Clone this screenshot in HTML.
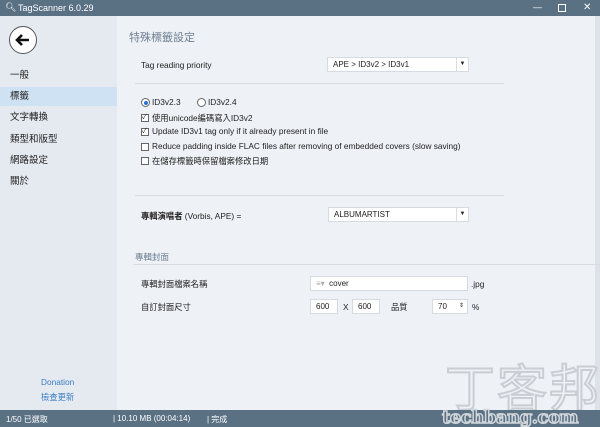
<!DOCTYPE html><html><head><meta charset="utf-8"><style>
*{margin:0;padding:0;box-sizing:border-box}
html,body{width:600px;height:427px;overflow:hidden}
body{font-family:"Liberation Sans","Noto Sans CJK TC",sans-serif;font-size:8px;color:#222;background:#eef1f6;position:relative}
.abs{position:absolute}
.tb{left:0;top:0;width:600px;height:16px;background:#5a7184;color:#fff;font-size:9px}
.sb{left:0;top:16px;width:117px;height:394px;background:#e5eaf0}
.st{left:0;top:410px;width:600px;height:17px;background:#5a7184;color:#fff;font-size:8px}
.nav{left:0;width:117px;height:19px;font-size:9.5px;padding-left:10px;line-height:19px}
.cb{width:8px;height:8px;border:1px solid #666;background:#fff;display:inline-block}
.inp{background:#fff;border:1px solid #d6dbe2;height:15px;line-height:13px;padding-left:5px;font-size:8px}
.hr{height:1px;background:#d8dde4}
.t{font-size:8.3px;white-space:nowrap}
</style></head><body>
<div class="abs tb"><span class="abs" style="left:5px;top:2px;font-size:9px">🔍︎</span><span class="abs" style="left:18px;top:3px">TagScanner 6.0.29</span>
<span class="abs" style="left:533px;top:2px">—</span><span class="abs" style="left:558px;top:1px;width:8px;height:8px;border:1px solid #fff;top:4px"></span><span class="abs" style="left:583px;top:2px;font-size:10px">✕</span></div>
<div class="abs sb"></div>
<div class="abs" style="left:9px;top:26px;width:28px;height:28px;border:1px solid #555;border-radius:50%;background:#fff"><svg width="26" height="26" viewBox="0 0 26 26"><path d="M19 13H7M12 8l-5 5 5 5" stroke="#111" stroke-width="2.6" fill="none"/></svg></div>
<div class="abs nav" style="top:66px">一般</div>
<div class="abs nav" style="top:87px;background:#cfe2f3">標籤</div>
<div class="abs nav" style="top:108px">文字轉換</div>
<div class="abs nav" style="top:130px">類型和版型</div>
<div class="abs nav" style="top:151px">網路設定</div>
<div class="abs nav" style="top:172px">關於</div>
<div class="abs t" style="left:41px;top:377px;color:#3a7cc4">Donation</div>
<div class="abs t" style="left:41px;top:391px;color:#3a7cc4">檢查更新</div>
<div class="abs" style="left:595px;top:16px;width:5px;height:394px;background:#dde2e8"></div>
<div class="abs" style="left:129px;top:29px;font-size:11px;color:#6d7f92">特殊標籤設定</div>
<div class="abs t" style="left:141px;top:60px">Tag reading priority</div>
<div class="abs inp" style="left:327px;top:57px;width:142px">APE &gt; ID3v2 &gt; ID3v1<span class="abs" style="right:0;top:0;width:12px;height:13px;border-left:1px solid #ddd;text-align:center;font-size:6px">▼</span></div>
<div class="abs hr" style="left:135px;top:83px;width:369px"></div>
<div class="abs" style="left:141px;top:98px;width:9px;height:9px;border:1px solid #666;border-radius:50%;background:#fff"><div style="margin:1.5px;width:4px;height:4px;border-radius:50%;background:#2a6fd0"></div></div>
<div class="abs t" style="left:152px;top:97px">ID3v2.3</div>
<div class="abs" style="left:197px;top:98px;width:9px;height:9px;border:1px solid #666;border-radius:50%;background:#fff"></div>
<div class="abs t" style="left:208px;top:97px">ID3v2.4</div>
<div class="abs cb" style="left:141px;top:114px;font-size:7px;line-height:6px">✓</div><div class="abs t" style="left:152px;top:112px">使用unicode編碼寫入ID3v2</div>
<div class="abs cb" style="left:141px;top:128px;font-size:7px;line-height:6px">✓</div><div class="abs t" style="left:152px;top:126px">Update ID3v1 tag only if it already present in file</div>
<div class="abs cb" style="left:141px;top:143px"></div><div class="abs t" style="left:152px;top:141px">Reduce padding inside FLAC files after removing of embedded covers (slow saving)</div>
<div class="abs cb" style="left:141px;top:157px"></div><div class="abs t" style="left:152px;top:155px">在儲存標籤時保留檔案修改日期</div>
<div class="abs hr" style="left:135px;top:195px;width:369px"></div>
<div class="abs t" style="left:141px;top:210px"><b>專輯演唱者</b> (Vorbis, APE) =</div>
<div class="abs inp" style="left:328px;top:207px;width:141px">ALBUMARTIST<span class="abs" style="right:0;top:0;width:12px;height:13px;border-left:1px solid #ddd;text-align:center;font-size:6px">▼</span></div>
<div class="abs t" style="left:135px;top:251px;color:#6d7f92;font-size:8.5px">專輯封面</div>
<div class="abs hr" style="left:133px;top:264px;width:467px"></div>
<div class="abs t" style="left:141px;top:278px">專輯封面檔案名稱</div>
<div class="abs inp" style="left:310px;top:276px;width:158px"><span style="color:#aaa">≡▾</span>&nbsp; cover</div>
<div class="abs t" style="left:471px;top:279px">.jpg</div>
<div class="abs t" style="left:141px;top:301px">自訂封面尺寸</div>
<div class="abs inp" style="left:310px;top:299px;width:28px">600</div>
<div class="abs t" style="left:343px;top:302px">X</div>
<div class="abs inp" style="left:352px;top:299px;width:28px">600</div>
<div class="abs t" style="left:391px;top:301px">品質</div>
<div class="abs inp" style="left:432px;top:299px;width:36px">70<span class="abs" style="right:3px;top:0;font-size:6px">⇕</span></div>
<div class="abs t" style="left:472px;top:302px">%</div>
<div class="abs" style="left:445px;top:360px;font-size:50px;line-height:50px;white-space:nowrap;color:#eef1f6;-webkit-text-stroke:2px #c9ced4;font-family:'Noto Sans CJK TC',sans-serif;letter-spacing:2px">丁客邦</div>
<div class="abs st"><span class="abs" style="left:6px;top:4px">1/50 已選取</span><span class="abs" style="left:113px;top:4px">| 10.10 MB (00:04:14)</span><span class="abs" style="left:207px;top:4px">| 完成</span></div>
<div class="abs" style="left:442px;top:407px;font-size:18px;white-space:nowrap;font-weight:bold;color:#5a7184;-webkit-text-stroke:1.5px #d0d5da;font-family:'DejaVu Serif',serif;letter-spacing:-0.5px">techbang.com</div>
</body></html>
